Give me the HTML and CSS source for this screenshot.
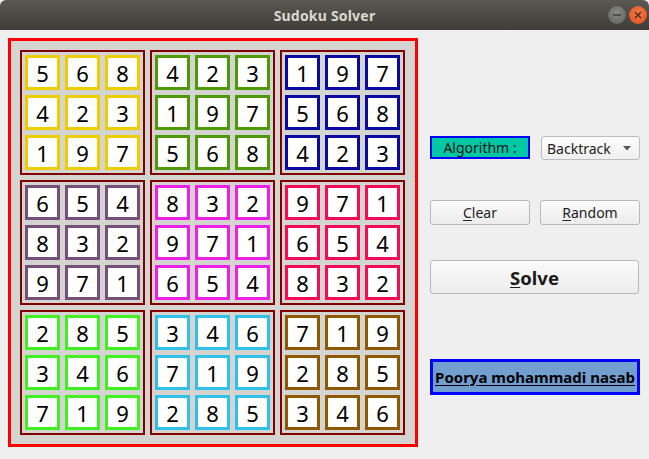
FILE: index.html
```html
<!DOCTYPE html>
<html>
<head>
<meta charset="utf-8">
<link rel="stylesheet" href="styles.css">
</head>
<body>
<div class="window">
  <div class="titlebar">
    <span class="title">Sudoku Solver</span>
    <div class="wbtns">
      <span class="wbtn min"><svg width="18" height="18" viewBox="0 0 18 18"><line x1="5" y1="9" x2="13" y2="9" stroke="#3a3a38" stroke-width="1.4"/></svg></span>
      <span class="wbtn close"><svg width="18" height="18" viewBox="0 0 18 18"><path d="M6 6L12 12M12 6L6 12" stroke="#4a2a1a" stroke-width="1.4"/></svg></span>
    </div>
  </div>
  <div class="content">
    <div class="board">
      <div class="block c1"><span>5</span><span>6</span><span>8</span><span>4</span><span>2</span><span>3</span><span>1</span><span>9</span><span>7</span></div>
      <div class="block c2"><span>4</span><span>2</span><span>3</span><span>1</span><span>9</span><span>7</span><span>5</span><span>6</span><span>8</span></div>
      <div class="block c3"><span>1</span><span>9</span><span>7</span><span>5</span><span>6</span><span>8</span><span>4</span><span>2</span><span>3</span></div>
      <div class="block c4"><span>6</span><span>5</span><span>4</span><span>8</span><span>3</span><span>2</span><span>9</span><span>7</span><span>1</span></div>
      <div class="block c5"><span>8</span><span>3</span><span>2</span><span>9</span><span>7</span><span>1</span><span>6</span><span>5</span><span>4</span></div>
      <div class="block c6"><span>9</span><span>7</span><span>1</span><span>6</span><span>5</span><span>4</span><span>8</span><span>3</span><span>2</span></div>
      <div class="block c7"><span>2</span><span>8</span><span>5</span><span>3</span><span>4</span><span>6</span><span>7</span><span>1</span><span>9</span></div>
      <div class="block c8"><span>3</span><span>4</span><span>6</span><span>7</span><span>1</span><span>9</span><span>2</span><span>8</span><span>5</span></div>
      <div class="block c9"><span>7</span><span>1</span><span>9</span><span>2</span><span>8</span><span>5</span><span>3</span><span>4</span><span>6</span></div>
    </div>
    <div class="panel">
      <div class="row algo-row">
        <div class="algo">Algorithm :</div>
        <div class="combo"><span>Backtrack</span><svg width="8" height="5" viewBox="0 0 8 5"><path d="M0 0H8L4 4.5Z" fill="#555"/></svg></div>
      </div>
      <div class="row btn-row">
        <div class="btn"><u>C</u>lear</div>
        <div class="btn"><u>R</u>andom</div>
      </div>
      <div class="btn solve"><u>S</u>olve</div>
      <div class="name">Poorya mohammadi nasab</div>
    </div>
  </div>
</div>
</body>
</html>
```
FILE: styles.css
```css
html, body {
  margin: 0;
  padding: 0;
  background: #efefef;
  font-family: "Noto Sans", "Open Sans", "DejaVu Sans", sans-serif;
}
.window {
  width: 649px;
  height: 459px;
  overflow: hidden;
}
.titlebar {
  height: 30px;
  background: linear-gradient(#5a5852, #3e3d39);
  border-radius: 6px 6px 0 0;
  display: flex;
  align-items: center;
  justify-content: center;
  position: relative;
}
.title {
  color: #dcd8cf;
  font-size: 14px;
  font-weight: bold;
  letter-spacing: 0.2px;
}
.wbtns {
  position: absolute;
  right: 2px;
  top: 6px;
  display: flex;
  gap: 3px;
}
.wbtn {
  width: 18px;
  height: 18px;
  border-radius: 50%;
  display: block;
}
.wbtn svg { display: block; }
.min { background: radial-gradient(circle at 50% 40%, #8a8a86, #5d5d5a); }
.close { background: radial-gradient(circle at 50% 40%, #f47a4a, #df4d19); }
.content {
  display: flex;
  align-items: flex-start;
}
.board {
  margin: 8px 0 0 8px;
  width: 385px;
  height: 385px;
  border: 3px solid #ff0000;
  background: #d4d5d0;
  padding: 9px 10px 9px 9px;
  display: grid;
  grid-template-columns: repeat(3, 125px);
  grid-template-rows: repeat(3, 125px);
  gap: 5px;
}
.block {
  border: 2px solid #800000;
  padding: 3px;
  display: grid;
  grid-template-columns: repeat(3, 35px);
  grid-template-rows: repeat(3, 35px);
  gap: 5px;
}
.block span {
  box-sizing: border-box;
  border: 3px solid;
  background: #fff;
  display: flex;
  align-items: center;
  justify-content: center;
  font-size: 22px;
  color: #000;
  line-height: 1;
}
.c1 span { border-color: #eccd00; }
.c2 span { border-color: #4e9a06; }
.c3 span { border-color: #0a0aa0; }
.c4 span { border-color: #75507b; }
.c5 span { border-color: #ee20e8; }
.c6 span { border-color: #f80a58; }
.c7 span { border-color: #40f020; }
.c8 span { border-color: #30c0e8; }
.c9 span { border-color: #8f5902; }
.panel {
  margin-left: 12px;
  width: 210px;
  display: flex;
  flex-direction: column;
}
.row {
  display: flex;
  justify-content: space-between;
}
.algo-row { margin-top: 106px; }
.algo {
  box-sizing: border-box;
  width: 100px;
  height: 23px;
  border: 2px solid #0000ff;
  background: #00c8a5;
  font-size: 14px;
  color: #111;
  display: flex;
  align-items: center;
  justify-content: center;
}
.combo {
  box-sizing: border-box;
  width: 99px;
  height: 24px;
  border: 1px solid #bdbdbd;
  border-radius: 3px;
  background: linear-gradient(#fdfdfd, #efefef);
  font-size: 14px;
  color: #222;
  display: flex;
  align-items: center;
  justify-content: space-between;
  padding: 0 8px 0 5px;
}
.btn-row { margin-top: 40px; }
.btn {
  box-sizing: border-box;
  width: 100px;
  height: 25px;
  border: 1px solid #b8b8b8;
  border-radius: 3px;
  background: linear-gradient(#fbfbfb, #ececec);
  font-size: 14px;
  color: #222;
  display: flex;
  align-items: center;
  justify-content: center;
}
.btn u { text-underline-offset: 2px; }
.solve {
  margin-top: 35px;
  width: 209px;
  height: 34px;
  font-size: 18.5px;
  font-weight: bold;
  color: #1a1a1a;
}
.name {
  margin-top: 65px;
  box-sizing: border-box;
  width: 210px;
  height: 36px;
  border: 3px solid #0000ff;
  background: #729fcf;
  font-size: 15px;
  font-weight: bold;
  color: #000;
  text-decoration: underline;
  text-underline-offset: 2px;
  display: flex;
  align-items: center;
  justify-content: center;
  white-space: nowrap;
}
```
